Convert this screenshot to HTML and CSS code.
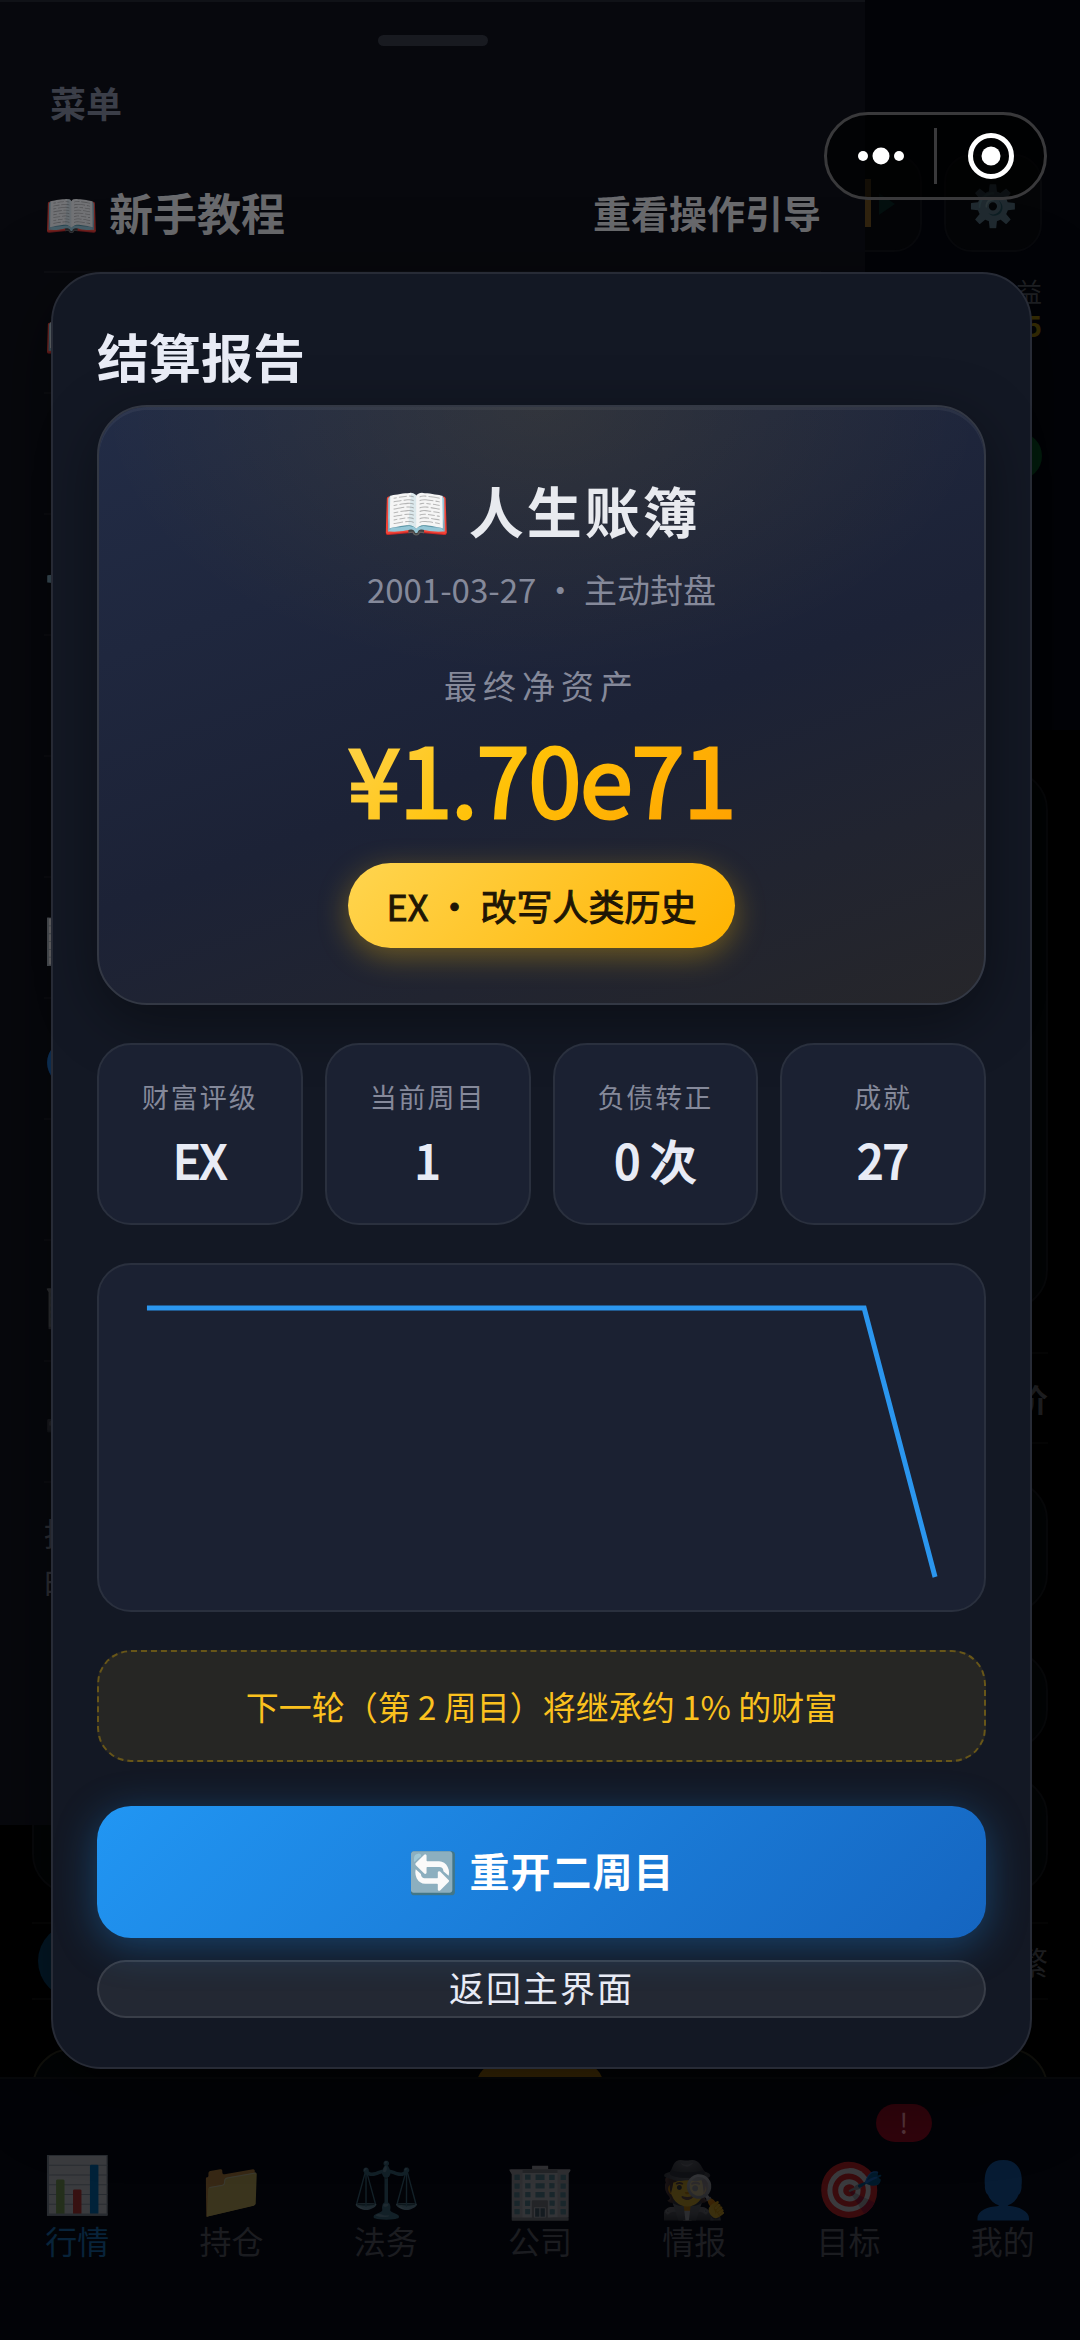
FILE: index.html
```html
<!DOCTYPE html>
<html lang="zh-CN">
<head>
  <meta charset="UTF-8">
  <meta name="viewport" content="width=device-width, initial-scale=1.0">
  <title>结算报告</title>
  <link rel="stylesheet" href="styles.css">
</head>
<body>
  <div class="app">
    <header class="app-header">
      <div class="tools">
        <button class="tool" aria-label="行情">
          <svg width="48" height="48" viewBox="0 0 48 48">
            <rect x="14" y="0" width="8" height="48" fill="#30230f"/>
            <path d="M30 14l16 11-16 11z" fill="#04100f"/>
          </svg>
        </button>
        <button class="tool">⚙️</button>
      </div>
      <div class="income">
        <span>收益</span>
        <strong>5</strong>
      </div>
      <div class="status"></div>
    </header>

    <main class="market">
      <div class="card card-xl"></div>
      <div class="ticker">价</div>
      <div class="card card-lg"></div>
      <div class="card card-sm"></div>
      <div class="card card-md"></div>
      <div class="ticker ticker-light"><i class="avatar"></i>繁</div>
      <div class="card card-gold"><i class="gold-btn"></i></div>
    </main>

    <nav class="tabbar">
      <a href="#" class="tab active"><span class="tab-icon">📊</span>行情</a>
      <a href="#" class="tab"><span class="tab-icon">📁</span>持仓</a>
      <a href="#" class="tab"><span class="tab-icon">⚖️</span>法务</a>
      <a href="#" class="tab"><span class="tab-icon">🏢</span>公司</a>
      <a href="#" class="tab"><span class="tab-icon">🕵️</span>情报</a>
      <a href="#" class="tab"><span class="tab-icon">🎯</span>目标<span class="badge">!</span></a>
      <a href="#" class="tab"><span class="tab-icon">👤</span>我的</a>
    </nav>
  </div>

  <!-- 侧边菜单 -->
  <aside class="menu">
    <div class="menu-handle"></div>
    <h2>菜单</h2>
    <ul>
      <li><span class="menu-name"><span class="emoji">📖</span> 新手教程</span><a href="#">重看操作引导</a></li>
      <li><span class="emoji">📖</span></li>
      <li></li>
      <li><span class="emoji">⚙️</span></li>
      <li></li>
      <li></li>
      <li><span class="emoji">📊</span></li>
      <li><span class="emoji">🔵</span></li>
      <li></li>
      <li><span class="emoji faint">🏢</span></li>
      <li><span class="emoji faint">➖</span></li>
    </ul>
    <p>提<br>时</p>
  </aside>

  <!-- 结算弹窗 -->
  <div class="overlay">
    <section class="modal">
      <h1>结算报告</h1>

      <div class="ledger">
        <h2>📖 人生账簿</h2>
        <p class="ledger-date">2001-03-27 · 主动封盘</p>
        <p class="ledger-label">最终净资产</p>
        <p class="ledger-amount"><span>¥1.70e71</span></p>
        <div class="rank">EX · 改写人类历史</div>
      </div>

      <div class="stats">
        <div class="stat"><span>财富评级</span><strong>EX</strong></div>
        <div class="stat"><span>当前周目</span><strong>1</strong></div>
        <div class="stat"><span>负债转正</span><strong>0 次</strong></div>
        <div class="stat"><span>成就</span><strong>27</strong></div>
      </div>

      <div class="chart">
        <svg viewBox="0 0 886 345" preserveAspectRatio="none">
          <polyline points="48,43 766,43 837,312" fill="none" stroke="#2b96ee" stroke-width="5"/>
        </svg>
      </div>

      <p class="notice">下一轮（第 2 周目）将继承约 1% 的财富</p>

      <button class="btn-restart">🔄 重开二周目</button>
      <button class="btn-back">返回主界面</button>
    </section>
  </div>

  <!-- 小程序胶囊按钮 -->
  <div class="capsule">
    <button aria-label="更多">
      <svg width="50" height="50" viewBox="0 0 50 50" fill="#fff">
        <circle cx="7" cy="25" r="5"/>
        <circle cx="25" cy="25" r="8.5"/>
        <circle cx="43" cy="25" r="5"/>
      </svg>
    </button>
    <i></i>
    <button aria-label="关闭">
      <svg width="50" height="50" viewBox="0 0 50 50">
        <circle cx="25" cy="25" r="20.5" fill="none" stroke="#fff" stroke-width="5"/>
        <circle cx="25" cy="25" r="9.5" fill="#fff"/>
      </svg>
    </button>
  </div>
</body>
</html>
```
FILE: styles.css
```css
* {
  box-sizing: border-box;
}
body {
  font-family: "Noto Sans CJK SC", sans-serif;
  margin: 0;
  background-color: #000;
  color: #e8ebf5;
  position: relative;
  min-height: 100vh;
  overflow-x: hidden;
}
h1, h2, p, ul {
  margin: 0;
  padding: 0;
}
button {
  font-family: inherit;
  border: none;
  background: none;
  padding: 0;
  cursor: pointer;
}
a {
  color: inherit;
  text-decoration: none;
}

/* 底层页面 */
.app {
  display: flex;
  flex-direction: column;
  min-height: 100vh;
}
.app-header {
  height: 730px;
  padding: 154px 38px 0;
  background-color: #020307;
}
.tools {
  display: flex;
  justify-content: flex-end;
  gap: 22px;
}
.tool {
  display: flex;
  align-items: center;
  justify-content: center;
  width: 98px;
  height: 98px;
  border: 2px solid #08090c;
  border-radius: 28px;
  background-color: #040507;
  font-size: 40px;
  color: rgba(255,255,255,0.22);
}
.income {
  display: flex;
  flex-direction: column;
  align-items: flex-end;
  margin-top: 22px;
  color: #202226;
  font-size: 26px;
  line-height: 34px;
}
.income strong {
  color: #3a3004;
  font-size: 28px;
}
.status {
  width: 180px;
  height: 48px;
  margin: 90px 0 0 auto;
  border-radius: 24px;
  background-color: #03200f;
}
.market {
  flex: 1 1 0px;
  min-height: 0;
  padding: 40px 32px 0;
  overflow: hidden;
}
.card {
  border: 2px solid #08090b;
  border-radius: 40px;
  background-color: #020405;
}
.card-xl {
  height: 540px;
}
.card-lg {
  height: 134px;
  margin: 36px 0;
}
.card-sm {
  height: 100px;
}
.card-md {
  height: 118px;
  margin: 26px 0 28px;
}
.card-gold {
  height: 120px;
  margin-top: 48px;
  border-color: #11110c;
}
.gold-btn {
  display: block;
  width: 126px;
  height: 60px;
  margin: 14px auto;
  border-radius: 20px;
  background-color: #382705;
}
.ticker {
  display: flex;
  align-items: center;
  justify-content: flex-end;
  height: 92px;
  margin-top: 42px;
  border-top: 2px solid #060606;
  border-bottom: 2px solid #060606;
  color: #232427;
  font-size: 32px;
  font-weight: 700;
}
.ticker-light {
  height: 78px;
  margin: 0;
  font-weight: 400;
}
.avatar {
  width: 76px;
  height: 76px;
  margin-left: 6px;
  margin-right: auto;
  border-radius: 50%;
  background-color: #031827;
}

/* 底部导航 */
.tabbar {
  display: flex;
  height: 263px;
  padding-top: 69px;
  border-top: 2px solid #07080a;
  background-color: #020307;
}
.tab {
  flex: 1;
  position: relative;
  text-align: center;
  color: #1b1c20;
  font-size: 32px;
  line-height: 36px;
}
.tab.active {
  color: #08233a;
}
.tab-icon {
  display: block;
  font-size: 55px;
  line-height: 74px;
  color: #000;
  opacity: 0.22;
}
.tab.active .tab-icon {
  transform: translateY(-5px);
}
.badge {
  position: absolute;
  top: -44px;
  right: -6px;
  width: 56px;
  height: 38px;
  border-radius: 19px;
  background-color: #31040c;
  color: #55343a;
  font-size: 28px;
  line-height: 36px;
}

/* 侧边菜单 */
.menu {
  position: absolute;
  top: 0;
  left: 0;
  width: 81%;
  max-width: 865px;
  height: 1825px;
  padding: 33px 44px 0;
  border-top: 2px solid #101217;
  background-color: #07080d;
}
.menu-handle {
  width: 110px;
  height: 11px;
  margin: 0 auto;
  border-radius: 6px;
  background-color: #181a20;
}
.menu h2 {
  margin: 30px 6px 24px;
  color: #3b3e48;
  font-size: 36px;
  line-height: 52px;
}
.menu ul {
  list-style: none;
}
.menu li {
  display: flex;
  align-items: center;
  justify-content: space-between;
  height: 121px;
  border-bottom: 2px solid #0c0d12;
  font-size: 44px;
}
.menu li a {
  font-size: 38px;
  font-weight: 700;
  color: #696a6d;
}
.menu-name {
  font-weight: 700;
  color: #696a6d;
}
.emoji {
  color: #000;
  opacity: 0.45;
}
.emoji.faint {
  opacity: 0.2;
}
.menu p {
  padding-top: 24px;
  color: #2f3138;
  font-size: 32px;
  line-height: 50px;
}

/* 结算弹窗 */
.overlay {
  position: absolute;
  top: 0;
  left: 0;
  width: 100%;
  min-height: 100%;
  display: flex;
  align-items: center;
  padding: 0 48px 0 51px;
}
.modal {
  width: 100%;
  padding: 46px 44px 49px;
  border: 2px solid #272b36;
  border-radius: 50px;
  background-color: #131824;
  box-shadow: 0 20px 80px rgba(0,0,0,0.5);
}
.modal h1 {
  margin-bottom: 13px;
  font-size: 52px;
  line-height: 72px;
}
.ledger {
  padding: 54px 40px 55px;
  border: 2px solid #333844;
  border-radius: 50px;
  background:
    radial-gradient(ellipse 50% 45% at 50% 0, rgba(255,193,7,0.08), transparent),
    linear-gradient(160deg, #222c46 0%, #1c2236 55%, #26262a 100%);
  box-shadow: 0 16px 60px rgba(0,0,0,0.4), inset 0 3px 0 rgba(255,255,255,0.05);
  text-align: center;
}
.ledger h2 {
  font-size: 55px;
  line-height: 96px;
  letter-spacing: 3px;
  color: #e8eaef;
}
.ledger-date {
  margin-bottom: 40px;
  color: #85899a;
  font-size: 33px;
  line-height: 64px;
}
.ledger-label {
  color: #85899a;
  font-size: 33px;
  line-height: 48px;
  letter-spacing: 6px;
}
.ledger-amount {
  margin-bottom: 18px;
  font-size: 95px;
  line-height: 136px;
}
.ledger-amount span {
  background: linear-gradient(135deg, #ffd54f, #ffc107 45%, #ffa000);
  -webkit-background-clip: text;
  background-clip: text;
  color: transparent;
  letter-spacing: -1px;
  -webkit-text-stroke: 3px transparent;
}
.rank {
  display: inline-block;
  padding: 0 39px;
  border-radius: 43px;
  background: linear-gradient(135deg, #ffd54f, #ffb300);
  box-shadow: 0 8px 30px rgba(255,193,7,0.35);
  color: #1f1604;
  font-size: 36px;
  line-height: 85px;
  vertical-align: top;
  -webkit-text-stroke: 1px #1f1604;
}
.stats {
  display: grid;
  grid-template-columns: repeat(4, 1fr);
  gap: 22px;
  margin: 38px 0;
}
.stat {
  display: flex;
  flex-direction: column;
  align-items: center;
  height: 182px;
  padding-top: 30px;
  border: 2px solid #2a303e;
  border-radius: 34px;
  background-color: #1b2132;
}
.stat span {
  color: #85899a;
  font-size: 27px;
  line-height: 44px;
  letter-spacing: 2px;
}
.stat strong {
  margin-top: 8px;
  font-size: 46px;
  font-weight: 400;
  line-height: 64px;
  -webkit-text-stroke: 2px #e8ebf5;
}
.chart {
  height: 349px;
  border: 2px solid #2a303e;
  border-radius: 34px;
  background-color: #1b2132;
}
.chart svg {
  display: block;
  width: 100%;
  height: 100%;
}
.notice {
  margin: 38px 0 44px;
  border: 2px dashed #685618;
  border-radius: 34px;
  background-color: #262624;
  color: #fbc11e;
  font-size: 33px;
  line-height: 108px;
  text-align: center;
}
.btn-restart, .btn-back {
  display: block;
  width: 100%;
  padding-bottom: 3px;
  border-radius: 34px;
}
.btn-restart {
  height: 132px;
  margin-bottom: 22px;
  background: linear-gradient(135deg, #2196f3, #1565c0);
  box-shadow: 0 8px 40px rgba(33,150,243,0.35);
  color: #fff;
  font-size: 40px;
  font-weight: 700;
  letter-spacing: 1px;
}
.btn-back {
  height: 58px;
  border: 2px solid rgba(255,255,255,0.1);
  background-color: rgba(255,255,255,0.07);
  color: #e8ebf5;
  font-size: 35px;
  line-height: 50px;
  letter-spacing: 2px;
}

/* 胶囊 */
.capsule {
  position: absolute;
  top: 112px;
  right: 33px;
  display: flex;
  align-items: center;
  width: 223px;
  height: 88px;
  border: 3px solid #39393b;
  border-radius: 44px;
  background-color: rgba(0,0,0,0.6);
}
.capsule button {
  flex: 1;
  height: 50px;
}
.capsule i {
  width: 3px;
  height: 56px;
  background-color: #39393b;
}
```
